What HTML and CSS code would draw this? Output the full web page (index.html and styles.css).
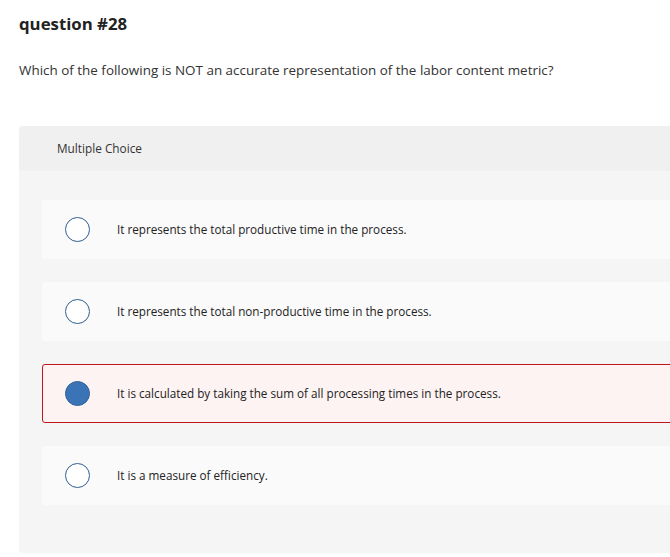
FILE: index.html
```html
<!DOCTYPE html>
<html>
<head>
<meta charset="utf-8">
<link rel="stylesheet" href="styles.css">
</head>
<body>
<h1 class="title">question #28</h1>
<p class="prompt">Which of the following is NOT an accurate representation of the labor content metric?</p>
<div class="panel">
  <div class="panel-header">Multiple Choice</div>
  <div class="options">
    <div class="option"><span class="radio"></span><span class="label">It represents the total productive time in the process.</span></div>
    <div class="option"><span class="radio"></span><span class="label">It represents the total non-productive time in the process.</span></div>
    <div class="option selected"><span class="radio"></span><span class="label">It is calculated by taking the sum of all processing times in the process.</span></div>
    <div class="option"><span class="radio"></span><span class="label">It is a measure of efficiency.</span></div>
  </div>
</div>
</body>
</html>
```
FILE: styles.css
```css
html, body {
  overflow: hidden;
}
body {
  margin: 0;
  padding: 14px 0 0 19px;
  font-family: "Open Sans", Lato, sans-serif;
  color: #222;
  background: #fff;
}
.title {
  margin: 0;
  font-size: 16.8px;
  font-weight: 700;
  line-height: 20px;
}
.prompt {
  margin: 27px 0 0;
  font-size: 13.45px;
  line-height: 18px;
  color: #333;
}
.panel {
  margin-top: 47px;
  width: 700px;
  background: #f5f5f5;
  border-radius: 4px;
  padding-bottom: 48px;
}
.panel-header {
  box-sizing: border-box;
  height: 45px;
  background: #f0f0f0;
  border-radius: 4px 4px 0 0;
  display: flex;
  align-items: center;
  padding: 0 0 2px 38px;
  font-size: 11.8px;
  color: #333;
}
.options {
  padding: 29px 0 0 23px;
  display: flex;
  flex-direction: column;
  gap: 23px;
}
.option {
  box-sizing: border-box;
  height: 59px;
  background: #fafafa;
  border: 1px solid transparent;
  border-radius: 3px;
  display: flex;
  align-items: center;
  padding-left: 22px;
  font-size: 11.7px;
  color: #222;
}
.label {
  padding-bottom: 2px;
}
.option.selected {
  background: #fdf3f2;
  border-color: #c0161b;
}
.radio {
  box-sizing: border-box;
  width: 25px;
  height: 25px;
  border-radius: 50%;
  border: 1.5px solid #2e5f91;
  background: #fff;
  flex: none;
  margin-right: 27px;
}
.selected .radio {
  background: #3b74b6;
  border-color: #2f619b;
}
```
